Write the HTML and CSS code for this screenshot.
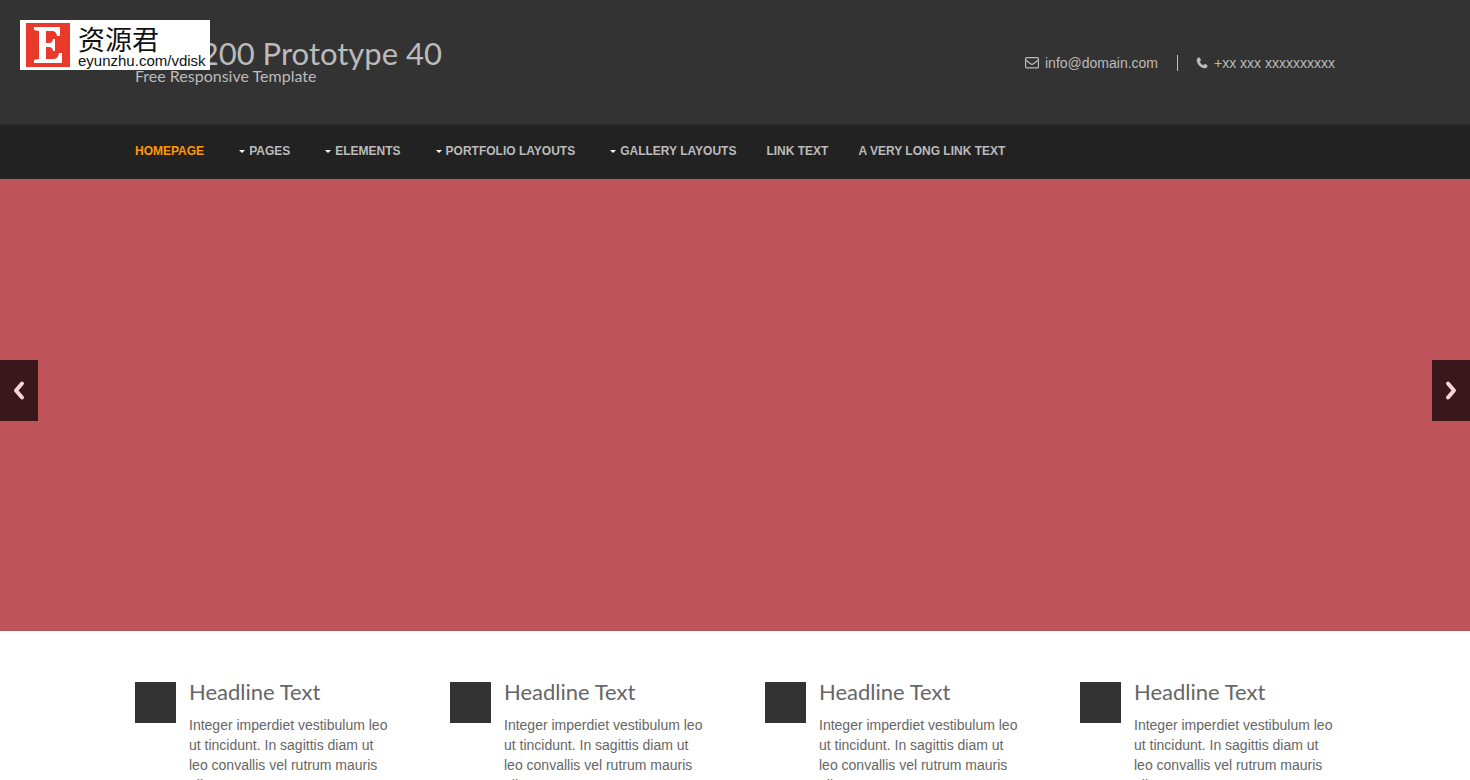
FILE: index.html
```html
<!DOCTYPE html>
<html lang="en">
<head>
<meta charset="utf-8">
<meta name="viewport" content="width=device-width, initial-scale=1">
<title>RS-1200 Prototype 40</title>
<link rel="stylesheet" href="styles.css">
</head>
<body>
<a class="badge" href="#" aria-label="资源君 eyunzhu.com/vdisk">
  <svg class="badge-mark" viewBox="0 0 44 44" aria-hidden="true">
    <path fill="#e8392b" d="M0 0h44v44H0z"/>
    <path fill="#fff" d="M8 4h26v9h-3c-.5-3.500-2-5-5-5h-6v12h3c2.500 0 3.500-1 4-4h2v12h-2c-.5-3-1.500-4-4-4h-3v12h7c3.500 0 5.500-2 6-6h3v10H8v-3l5-1V8L8 7z"/>
  </svg>
  <span class="badge-text"><span class="badge-name" lang="zh">资源君</span><span class="badge-url">eyunzhu.com/vdisk</span></span>
</a>
<header class="header">
  <div class="wrap header-row">
    <div class="brand">
      <h1 class="brand-title"><a href="#">RS-1200 Prototype 40</a></h1>
      <p class="brand-tag">Free Responsive Template</p>
    </div>
    <ul class="contact">
      <li class="contact-item">
        <svg class="icon-mail" viewBox="0 0 14 12" fill="none" stroke="currentColor" stroke-width="1.200" aria-hidden="true"><rect x=".6" y=".6" width="12.800" height="10.300" rx="1"/><path d="M.7 3 5.500 6.800Q7 8 8.500 6.800L13.300 3"/></svg>
        <span>info@domain.com</span>
      </li>
      <li class="contact-item">
        <svg class="icon-phone" viewBox="0 0 12 12" fill="currentColor" aria-hidden="true"><path d="M2.300.6 3.200.4Q3.700.3 4 1L5 3.200Q5.100 3.600 4.600 4L3.700 4.800Q4.800 7.200 7.200 8.300L8.200 7.300Q8.600 6.800 9 7L11.200 8.100Q11.700 8.400 11.500 9 11.200 10.500 10.300 11 9.200 11.600 7.800 11.200 2.300 9.600.7 4.200.2 1.600 2.300.6Z"/></svg>
        <span>+xx xxx xxxxxxxxxx</span>
      </li>
    </ul>
  </div>
</header>
<nav class="nav" aria-label="Main">
  <ul class="wrap nav-list">
    <li><a class="nav-link active" href="#">Homepage</a></li>
    <li><a class="nav-link drop" href="#">Pages</a></li>
    <li><a class="nav-link drop" href="#">Elements</a></li>
    <li><a class="nav-link drop" href="#">Portfolio Layouts</a></li>
    <li><a class="nav-link drop" href="#">Gallery Layouts</a></li>
    <li><a class="nav-link" href="#">Link Text</a></li>
    <li><a class="nav-link" href="#">A Very Long Link Text</a></li>
  </ul>
</nav>
<section class="slider" aria-label="Slides">
  <button class="slide-btn" type="button" aria-label="Previous"><svg class="chevron" viewBox="0 0 12 20" aria-hidden="true"><path d="M9 3 3 10 9 17"/></svg></button>
  <button class="slide-btn" type="button" aria-label="Next"><svg class="chevron" viewBox="0 0 12 20" aria-hidden="true"><path d="M3 3 9 10 3 17"/></svg></button>
</section>
<main class="wrap features">
  <article class="feature"><span class="feature-box"></span><div><h2 class="feature-title">Headline Text</h2><p class="feature-text">Integer imperdiet vestibulum leo ut tincidunt. In sagittis diam ut leo convallis vel rutrum mauris aliquam</p></div></article>
  <article class="feature"><span class="feature-box"></span><div><h2 class="feature-title">Headline Text</h2><p class="feature-text">Integer imperdiet vestibulum leo ut tincidunt. In sagittis diam ut leo convallis vel rutrum mauris aliquam</p></div></article>
  <article class="feature"><span class="feature-box"></span><div><h2 class="feature-title">Headline Text</h2><p class="feature-text">Integer imperdiet vestibulum leo ut tincidunt. In sagittis diam ut leo convallis vel rutrum mauris aliquam</p></div></article>
  <article class="feature"><span class="feature-box"></span><div><h2 class="feature-title">Headline Text</h2><p class="feature-text">Integer imperdiet vestibulum leo ut tincidunt. In sagittis diam ut leo convallis vel rutrum mauris aliquam</p></div></article>
</main>
</body>
</html>
```
FILE: styles.css
```css
* { box-sizing: border-box; }
html { scrollbar-width: none; }
body {
  margin: 0;
  background: #fff;
  color: #666;
  font: 14px/20px "Liberation Sans", Arial, sans-serif;
}
h1, h2, p, ul { margin: 0; padding: 0; font-weight: 400; }
ul { list-style: none; }
a { color: inherit; text-decoration: none; }
svg { display: block; flex: none; }

.wrap { width: 100%; max-width: 1200px; margin: 0 auto; }

.badge {
  position: absolute;
  top: 20px;
  left: 20px;
  display: flex;
  gap: 8px;
  padding: 3px 4px 3px 6px;
  background: #fff;
  color: #111;
}
.badge-mark { width: 44px; height: 44px; }
.badge-text { display: flex; flex-direction: column; }
.badge-name { font: 27px/32px "Noto Sans CJK SC", sans-serif; }
.badge-url { font-size: 15px; line-height: 12px; }

.header { background: #333; color: #bbb; padding: 38px 0 40px; }
.header-row { display: flex; justify-content: space-between; align-items: center; }
.brand { font-family: Lato, sans-serif; }
.brand-title { font-size: 31px; line-height: 30px; }
.brand-tag { font-size: 16px; line-height: 16px; }
.contact { display: flex; padding-top: 4px; }
.contact-item { display: flex; align-items: center; gap: 6px; line-height: 16px; }
.contact-item + .contact-item { margin-left: 19px; padding-left: 18px; border-left: 1px solid #bbb; }
.icon-mail { width: 14px; height: 12px; }
.icon-phone { width: 12px; height: 12px; }

.nav { background: #222; color: #bbb; border-top: 1px solid #2a2a2a; }
.nav-list { display: flex; flex-wrap: wrap; gap: 0 30px; }
.nav-link {
  display: block;
  padding: 16px 0 18px;
  font-size: 12px;
  font-weight: 700;
  text-transform: uppercase;
}
.nav-link.active { color: #f90; }
.nav-link.drop { display: flex; align-items: center; gap: 4px; padding-left: 5px; }
.nav-link.drop::before {
  content: "";
  border: 3px solid transparent;
  border-top-color: #fff;
  border-bottom: 0;
}

.slider {
  display: flex;
  justify-content: space-between;
  padding: 181px 0 210px;
  background: #be535a;
}
.slide-btn {
  display: grid;
  place-items: center;
  padding: 20px 13px;
  border: 0;
  border-radius: 0;
  background: #39171b;
}
.chevron {
  width: 12px;
  height: 21px;
  fill: none;
  stroke: #f6d5da;
  stroke-width: 4;
  stroke-linecap: round;
  stroke-linejoin: round;
}

.features {
  display: grid;
  grid-template-columns: repeat(4, 1fr);
  gap: 60px;
  padding: 51px 0;
}
.feature { display: flex; gap: 13px; }
.feature-box { flex: none; width: 41px; height: 41px; background: #333; }
.feature-title { margin-bottom: 13px; font: 22px/20px Lato, sans-serif; }
```
